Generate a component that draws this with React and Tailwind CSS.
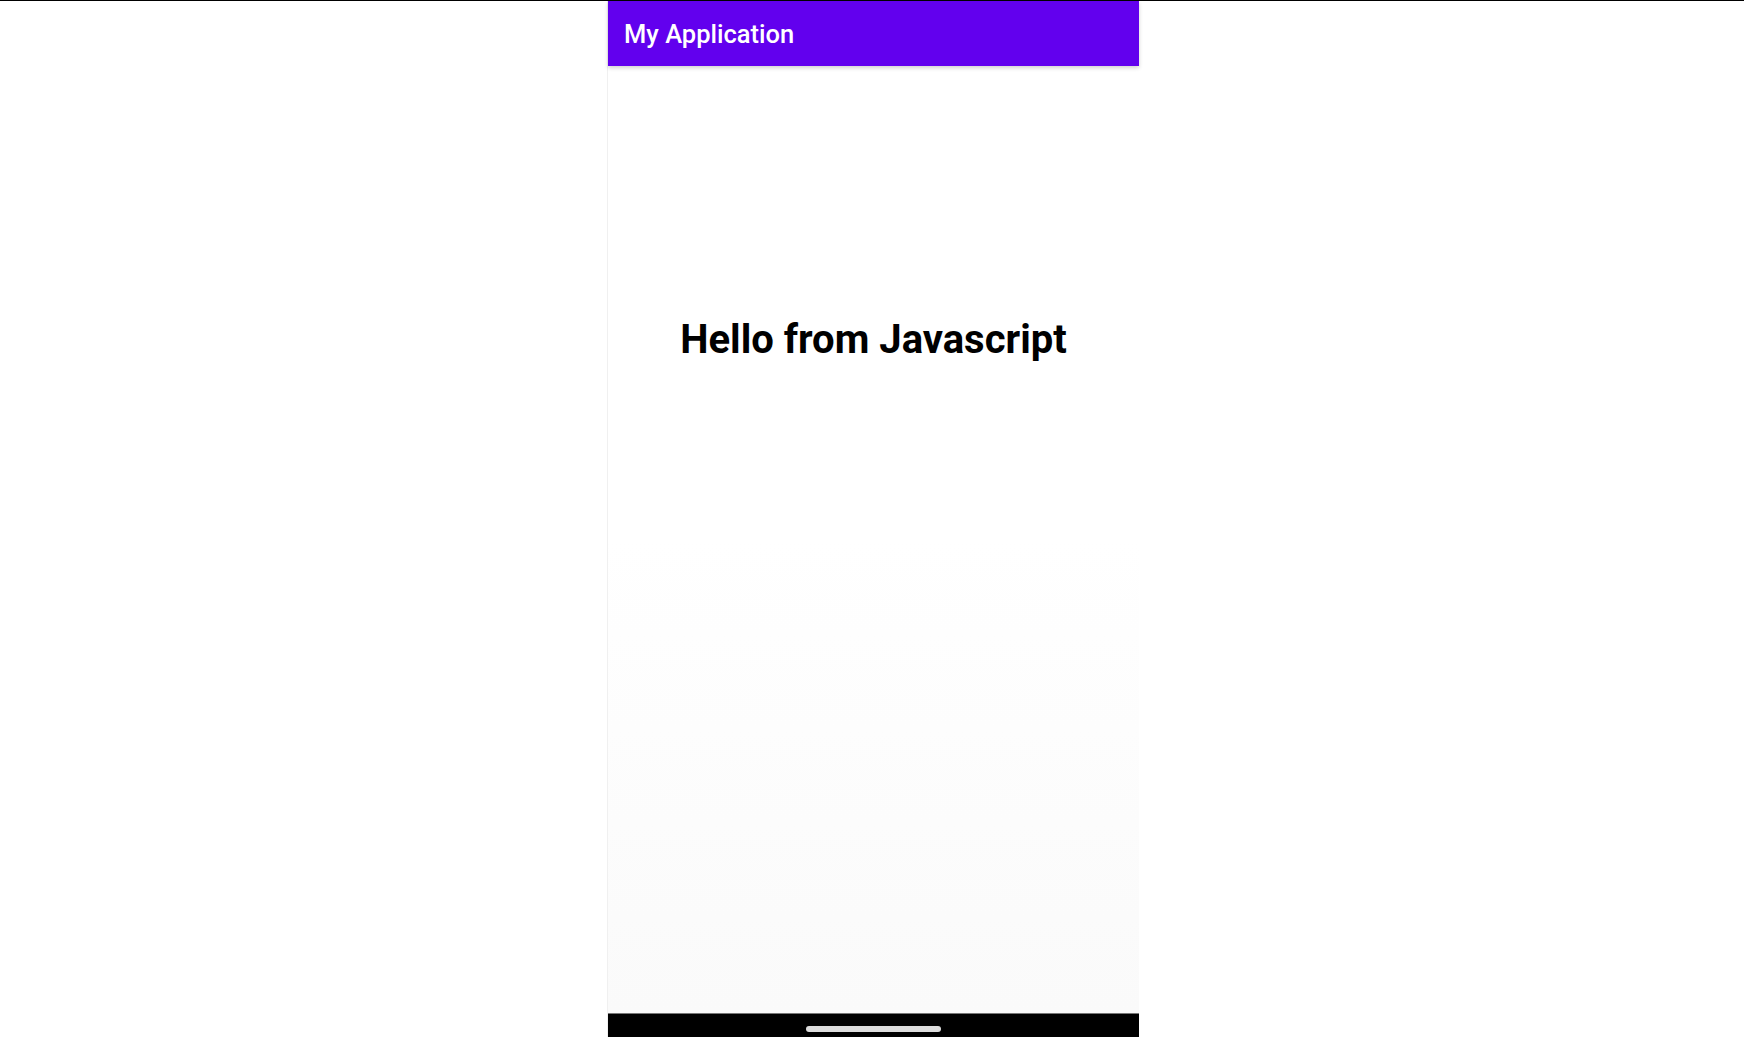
import React from 'react';

export default function App() {
  return (
    <div className="w-full h-[1037px] bg-white flex flex-col border-t border-black overflow-hidden" style={{ fontFamily: 'Roboto, "Noto Sans", sans-serif' }}>
      <div className="ml-[607px] w-[532px] flex-1 flex flex-col border-l border-[#f0f0f0]">
        {/* Toolbar */}
        <div className="h-[65px] bg-[#6200ee] px-[16px] flex items-center shadow-[0_2px_4px_rgba(0,0,0,0.18)] relative z-10">
          <h1 className="text-white text-[25.5px] leading-[30px] font-medium">My Application</h1>
        </div>

        {/* Content */}
        <div className="flex-1 flex flex-col items-center pt-[252px] bg-gradient-to-b from-white via-white to-[#fafafa]">
          <p className="text-black text-[40px] leading-[44px] font-bold">Hello from Javascript</p>
        </div>

        {/* Navigation bar */}
        <div className="h-[24px] bg-black border-t border-[#777] flex justify-center pt-[12px]">
          <div className="w-[135px] h-[6px] rounded-full bg-[#dcdcdc]"></div>
        </div>
      </div>
    </div>
  );
}
